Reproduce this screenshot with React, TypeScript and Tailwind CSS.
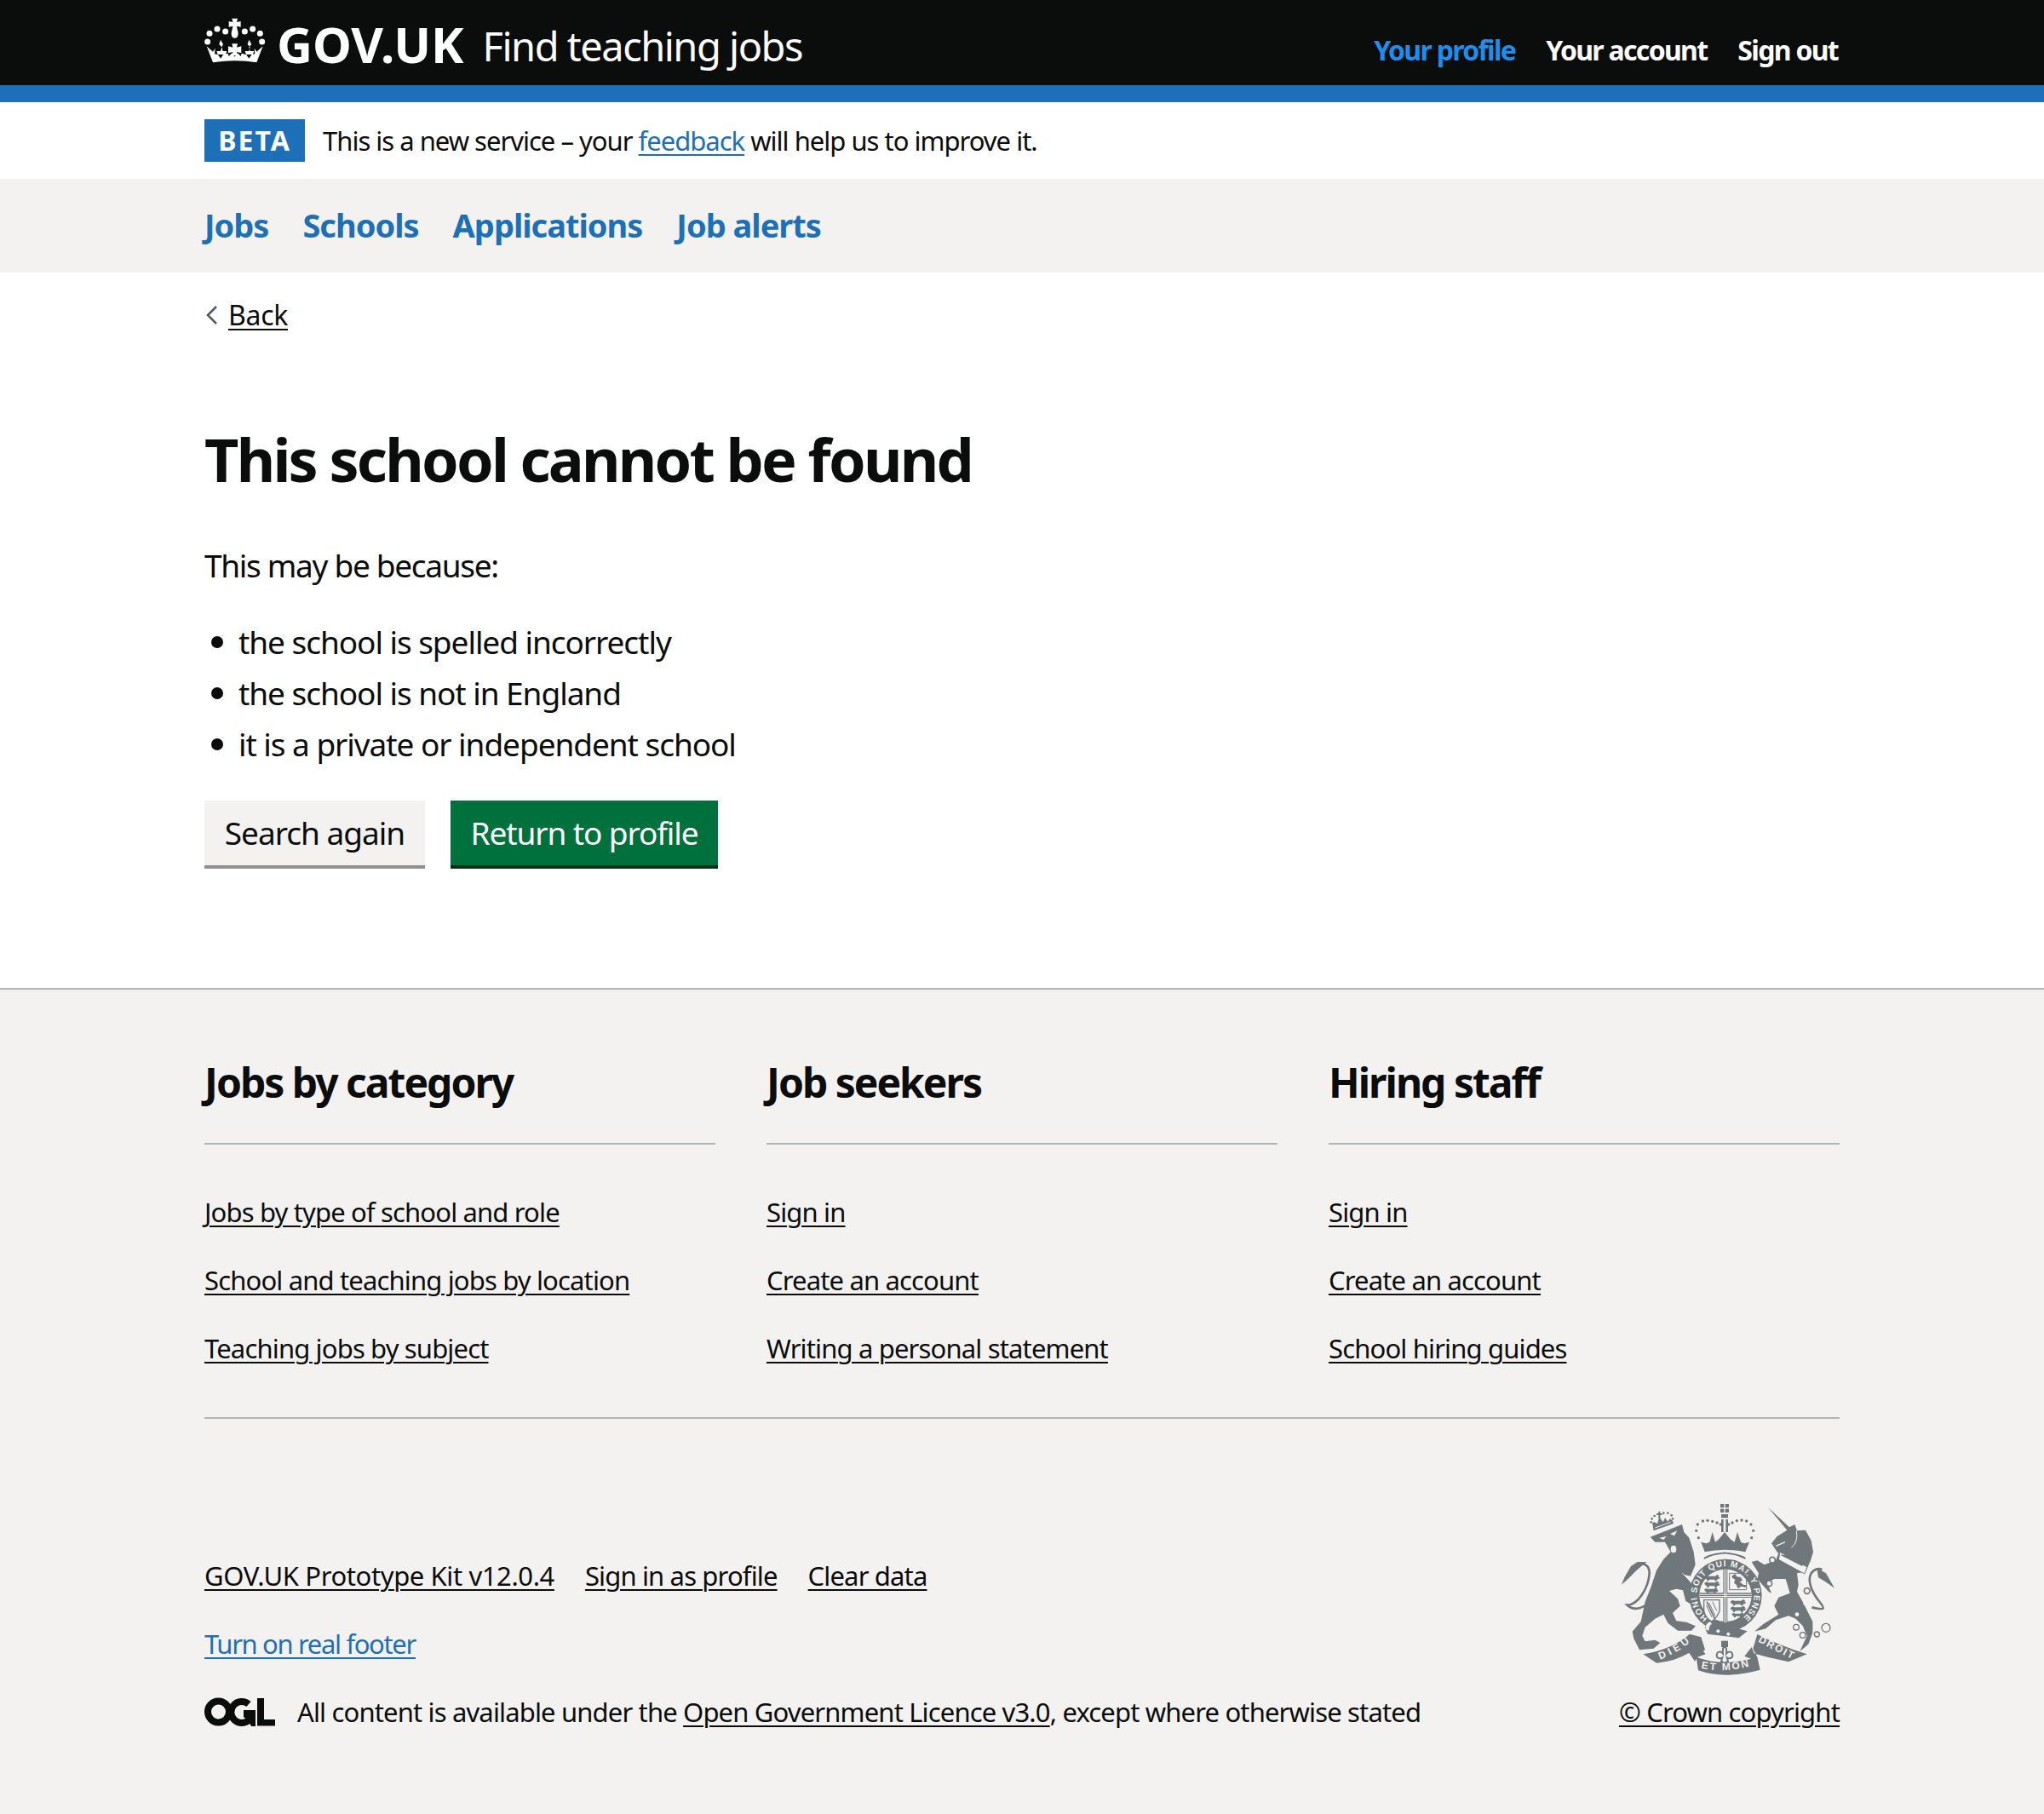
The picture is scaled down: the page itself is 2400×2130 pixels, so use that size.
import React from "react";

function Crown() {
  const dots: [number, number][] = [[41, 117], [48, 88], [75, 72], [104, 81], [233, 117], [226, 88], [200, 72], [172, 81]];
  return (
    <svg viewBox="30 30 216 165" className="w-[72px] h-[55px] shrink-0" fill="white">
      {dots.map((d, i) => <circle key={i} cx={d[0]} cy={d[1]} r="10.5" />)}
      <path d="M127 35h20l-3 13 14-3v20l-14-3 2 12c5 10 5 30-9 30s-14-20-9-30l2-12-14 3V45l14 3z" />
      <path d="M38 133L60 152 68 140 66 160 78 163 87 176 96 163 113 158 116 168 127 157 137 170 147 157 158 168 161 158 178 163 187 176 196 163 208 160 206 140 214 152 236 133 214 190Q137 177 60 190Z" />
      <path d="M87 110l9 16-5 10 4 14h14l-4 12H77l-4-12h14l4-14-9-10z" />
      <path d="M187 110l9 16-9 10 4 14h14l-4 12h-24l-4-12h14l4-14-9-10z" />
      <path d="M127 124h20l-3 13 16-4v24l-16-4 3 13h-20l3-13-16 4v-24l16 4z" />
    </svg>
  );
}

function Ogl() {
  return (
    <svg viewBox="0 0 83 34" className="w-[83px] h-[34px] shrink-0" fill="#0b0c0c">
      <circle cx="16.5" cy="17" r="12.5" fill="none" stroke="#0b0c0c" strokeWidth="8" />
      <path d="M52 8A12.5 12.5 0 1 0 53 26" fill="none" stroke="#0b0c0c" strokeWidth="8" />
      <path d="M46 15h14v19h-5l-3-6-6-5z" />
      <path d="M62 1h8v25h13v7.500H62z" />
    </svg>
  );
}

function MiniLion({ x, y, s = 1 }: { x: number; y: number; s?: number }) {
  return <path transform={`translate(${x} ${y}) scale(${s})`} d="M0 8l8-6 6 3h24l8-5 6 4-2 6 6-2-4 8-6 0-2 6h-6l-2-5H18l-2 5h-6l-1-6-5-2z" />;
}

function Crest() {
  const c = "#6f777b";
  const bg = "#f3f2f1";
  const arch: [number, number][] = [[313, 155], [305, 130], [310, 108], [328, 96], [345, 94], [362, 97], [378, 102], [391, 108], [419, 108], [432, 102], [448, 95], [465, 93], [482, 96], [498, 108], [506, 130], [500, 155]];
  const crownDots: [number, number][] = [[146, 100], [149, 88], [158, 78], [190, 68], [205, 68], [218, 76], [222, 88]];
  return (
    <svg viewBox="0 0 810 645" className="w-[270px] h-[215px]" fill={c}>
      {/* lion */}
      <path d="M143 152L255 108 262 135 280 155 296 205 302 250 285 290 262 285 300 330 315 360 312 385 292 392 268 378 258 340 235 335 210 342 240 370 248 395 222 420 235 448 270 452 303 466 288 482 240 482 205 455 190 425 160 440 125 470 115 500 125 520 160 515 178 525 155 545 105 550 85 510 80 485 110 450 125 380 145 330 165 270 190 230 215 205 195 170 160 170Z" />
      <path d="M130 390C100 412 78 406 62 392 100 392 136 332 140 282 142 252 118 240 98 250" fill="none" stroke={c} strokeWidth="8" />
      <path d="M130 240L98 240 75 255 52 295 42 320 65 300 92 272 112 255Z" />
      <path d="M175 155L200 150 190 162ZM213 141L238 130 228 148Z" fill={bg} />
      <ellipse cx="225" cy="195" rx="10" ry="13" fill={bg} />
      <path d="M256 280L300 322" stroke={bg} strokeWidth="3" />
      {/* lion crown */}
      <path d="M155 130L225 105 222 95 212 88 205 98 195 85 188 100 175 82 168 105 158 100 150 102Z" />
      <path d="M160 120L215 100" stroke={bg} strokeWidth="3" />
      <path d="M172 62h6v7h7v6h-7v12h-6V75h-7v-6h7z" />
      {crownDots.map((d, i) => <circle key={i} cx={d[0]} cy={d[1]} r="4" />)}
      <path d="M390 36h30v30h-30z" />
      <path d="M403 36h4v30h-4zM390 49h30v4h-30z" fill={bg} />
      <path d="M393 72h24v13h-24zM393 90h8v45h-8zM409 90h8v45h-8z" />
      {arch.map((d, i) => <circle key={i} cx={d[0]} cy={d[1]} r="5" />)}
      <path d="M322 170L340 175 352 170 362 135 372 170 385 160 405 135 425 160 440 170 450 135 462 170 474 175 492 170 478 205Q405 190 335 205Z" />
      <path d="M333 228Q405 190 478 228 470 216 405 208 342 216 333 228Z" stroke={c} strokeWidth="5" />
      {/* garter */}
      <circle cx="408" cy="358" r="128" />
      <circle cx="408" cy="358" r="92" fill={bg} />
      <path id="garter" d="M347 437A101 101 0 1 1 469 437" fill="none" />
      <text fill={bg} fontFamily="Liberation Sans" fontWeight="700" fontSize="30">
        <textPath href="#garter" textLength="500" lengthAdjust="spacing">HONI SOIT QUI MAL Y PENSE</textPath>
      </text>
      <path d="M400 266h15v188h-15zM316 349h184v17H316z" />
      <path d="M403 266h3v188h-3zM409 266h3v188h-3zM316 353h184v3H316zM316 360h184v3H316z" fill={bg} />
      <g>
        <MiniLion x={333} y={285} />
        <MiniLion x={333} y={308} />
        <MiniLion x={333} y={331} s={0.9} />
        <path d="M430 290l12-8 6 10 14 2 6 12-10 4 12 10 12 2-4 8-14-4-12 8-6-14-8-6 4-12-10-6z" />
        <path d="M422 280h60v58h-60z" fill="none" stroke={c} strokeWidth="3" />
        <MiniLion x={425} y={372} />
        <MiniLion x={425} y={395} />
        <MiniLion x={430} y={418} s={0.8} />
        <path d="M332 374h55v38q-8 25-28 38-22-13-27-38z" fill={bg} stroke={c} strokeWidth="4" />
        <path d="M342 380l28 60" stroke={c} strokeWidth="5" />
        <path d="M340 392l20 42M350 384l22 46M362 380l15 32" stroke={c} strokeWidth="3" />
      </g>
      <path d="M335 470l20-22 130 36-30 24-110-14z" />
      <path d="M338 478q-4-18 16-28l6 8q-12 8-10 24z" fill={bg} />
      <circle cx="382" cy="484" r="6" fill={bg} />
      <circle cx="418" cy="494" r="6" fill={bg} />
      {/* fleur */}
      <path d="M393 518h24v22h-24z" />
      <path d="M405 535c-10 10-6 20-6 28 -8-12-22-6-22 6 0 10 12 14 20 8l-4 14 12 6 12-6-4-14c8 6 20 2 20-8 0-12-14-18-22-6 0-8 4-18-6-28z" fill="none" stroke={c} strokeWidth="6" />
      {/* ribbons */}
      <path d="M118 565Q220 548 282 494L322 505 336 548 302 584 280 560Q230 590 165 596Z" />
      <path d="M280 560L300 590 310 575 338 565 318 540Z" />
      <path d="M305 575Q405 612 520 575L530 620Q405 655 312 622Z" />
      <path d="M520 495Q600 535 695 565 665 578 630 592 560 578 492 558L500 580 520 575 505 545Z" />
      <path d="M475 572L500 540 512 570 520 590Z" />
      {/* unicorn */}
      <g transform="translate(390 0)">
        <path d="M168 48L243 118 262 108 270 130 300 128 320 165 327 205 318 235 300 275 270 280 275 320 270 345 290 380 310 420 325 450 325 490 310 530 280 555 305 500 290 465 265 440 240 430 195 445 160 475 120 485 150 460 205 425 190 395 205 365 245 350 230 300 190 300 165 315 180 350 170 345 130 300 135 280 110 240 130 235 155 250 195 235 205 210 200 205 190 190 180 175 200 150 235 128Z" />
        <path d="M196 184L228 170" stroke={bg} strokeWidth="4" />
        <path d="M268 130Q275 170 250 190" fill="none" stroke={bg} strokeWidth="3" />
        <path d="M210 205L306 258 296 282 205 232Z" fill={bg} stroke={c} strokeWidth="3" />
        <path d="M215 214l12 3 2-8 6 10 10 3 3-8 6 12 10 3 3-8 6 13 12 5 8 8-5 8-75-38z" />
        <path d="M322 400C372 412 370 405 345 375 322 345 305 305 320 280 332 262 350 262 358 268" fill="none" stroke={c} strokeWidth="8" />
        <path d="M340 262L372 280 402 332 370 310 345 295Z" />
        <circle cx="298" cy="385" r="7" fill={bg} />
        <circle cx="270" cy="425" r="7" fill={bg} />
        <circle cx="305" cy="342" r="10" fill={bg} stroke={c} strokeWidth="5" />
        <circle cx="183" cy="233" r="10" fill={bg} stroke={c} strokeWidth="5" />
        <circle cx="172" cy="316" r="10" fill={bg} stroke={c} strokeWidth="5" />
        <circle cx="267" cy="470" r="10" fill={bg} stroke={c} strokeWidth="4" />
        <circle cx="290" cy="498" r="10" fill={bg} stroke={c} strokeWidth="4" />
        <circle cx="340" cy="495" r="9" fill={bg} stroke={c} strokeWidth="4" />
        <circle cx="372" cy="472" r="15" fill={bg} stroke={c} strokeWidth="4" />
      </g>
      <path id="r1" d="M178 584Q240 560 288 518" fill="none" />
      <path id="r2" d="M322 614Q405 632 500 606" fill="none" />
      <path id="r3" d="M522 520Q580 552 642 582" fill="none" />
      <g fill={bg} fontFamily="Liberation Sans" fontWeight="700">
        <text fontSize="36"><textPath href="#r1" textLength="120" lengthAdjust="spacing">DIEU</textPath></text>
        <text fontSize="36"><textPath href="#r2" textLength="170" lengthAdjust="spacing">ET MON</textPath></text>
        <text fontSize="36"><textPath href="#r3" textLength="135" lengthAdjust="spacing">DROIT</textPath></text>
      </g>
    </svg>
  );
}

const L = "underline decoration-[2px] underline-offset-[4px]";

function Col({ title, links }: { title: string; links: string[] }) {
  return (
    <div>
      <h2 className="text-[48px] leading-[56px] font-bold tracking-[-2px] pb-[43px] border-b-2 border-[#b1b4b6] mt-[-1px]">{title}</h2>
      <ul className="mt-[59px] flex flex-col gap-[40px]">
        {links.map((l) => <li key={l} className="text-[31px] leading-[40px] tracking-[-0.85px]"><a className={L}>{l}</a></li>)}
      </ul>
    </div>
  );
}

export default function App() {
  return (
    <div className="w-[2400px] h-[2130px] bg-white text-[#0b0c0c] overflow-hidden font-['Noto_Sans',sans-serif]">
      <header className="h-[120px] bg-[#0b0c0c] border-b-[20px] border-[#1d70b8] px-[240px] flex items-start justify-between">
        <div className="flex items-center h-[100px] text-white">
          <div className="mt-[-5px]"><Crown /></div>
          <span className="ml-[13px] text-[58px] leading-[100px] font-bold pt-[3px]">GOV.UK</span>
          <span className="ml-[22px] text-[47px] leading-[100px] tracking-[-1.5px] pt-[8px]">Find teaching jobs</span>
        </div>
        <nav className="flex gap-[36px] h-[100px] items-center pt-[18px] pr-[2px] text-[32px] font-bold text-white tracking-[-1.7px]">
          <a className="text-[#1d8feb]">Your profile</a>
          <a>Your account</a>
          <a>Sign out</a>
        </nav>
      </header>
      <div className="h-[90px] px-[240px] flex items-center">
        <span className="bg-[#1d70b8] text-white font-bold text-[32px] leading-[50px] h-[50px] w-[118px] text-center tracking-[2px]">BETA</span>
        <p className="ml-[21px] text-[31px] tracking-[-1px]">This is a new service – your <a className={`${L} text-[#1d70b8]`}>feedback</a> will help us to improve it.</p>
      </div>
      <nav className="h-[110px] bg-[#f3f2f1] px-[240px] flex items-center gap-[40px] text-[38px] font-bold text-[#1d70b8] tracking-[-1px] pb-[2px]">
        <a>Jobs</a><a>Schools</a><a>Applications</a><a>Job alerts</a>
      </nav>
      <main className="px-[240px] h-[840px] pt-[30px]">
        <a className="flex items-center h-[40px] text-[32px] tracking-[-0.3px]">
          <svg viewBox="0 0 14 24" className="w-[14px] h-[24px] ml-[2px] mr-[12px]" fill="none" stroke="#505a5f" strokeWidth="2.5"><path d="M12 2L2 12l10 10" /></svg>
          <span className={L}>Back</span>
        </a>
        <h1 className="mt-[99px] text-[70px] leading-[100px] font-bold tracking-[-2.75px]">This school cannot be found</h1>
        <p className="mt-[50px] text-[37px] leading-[50px] tracking-[-1.3px]">This may be because:</p>
        <ul className="mt-[40px] flex flex-col gap-[10px] text-[37px] leading-[50px] tracking-[-1.05px]">
          {["the school is spelled incorrectly", "the school is not in England", "it is a private or independent school"].map((t) => (
            <li key={t} className="flex items-center"><span className="w-[14px] h-[14px] rounded-full bg-[#0b0c0c] ml-[8px] mr-[18px]" />{t}</li>
          ))}
        </ul>
        <div className="flex gap-[30px] mt-[41px]">
          <a className="h-[80px] w-[259px] bg-[#f3f2f1] border-b-4 border-[#929191] flex items-center justify-center text-[37px] tracking-[-1px]">Search again</a>
          <a className="h-[80px] w-[314px] bg-[#00703c] border-b-4 border-[#002d18] flex items-center justify-center text-[37px] tracking-[-1.1px] text-white">Return to profile</a>
        </div>
      </main>
      <footer className="bg-[#f3f2f1] border-t-2 border-[#b1b4b6] h-[970px] px-[240px] pt-[82px]">
        <div className="grid grid-cols-3 gap-[60px]">
          <Col title="Jobs by category" links={["Jobs by type of school and role", "School and teaching jobs by location", "Teaching jobs by subject"]} />
          <Col title="Job seekers" links={["Sign in", "Create an account", "Writing a personal statement"]} />
          <Col title="Hiring staff" links={["Sign in", "Create an account", "School hiring guides"]} />
        </div>
        <div className="mt-[61px] border-t-2 border-[#b1b4b6] flex justify-between items-end text-[31px] leading-[40px] tracking-[-0.85px]">
          <div>
            <div className="flex gap-[36px]"><a className={`${L} tracking-[-0.4px]`}>GOV.UK Prototype Kit v12.0.4</a><a className={L}>Sign in as profile</a><a className={L}>Clear data</a></div>
            <div className="mt-[40px]"><a className={`${L} text-[#1d70b8] tracking-[-1.35px]`}>Turn on real footer</a></div>
            <div className="mt-[40px] flex items-center gap-[26px]"><Ogl /><span>All content is available under the <a className={L}>Open Government Licence v3.0</a>, except where otherwise stated</span></div>
          </div>
          <div className="flex flex-col items-end pt-[88px]">
            <Crest />
            <a className={`${L} mt-[21px]`}>© Crown copyright</a>
          </div>
        </div>
      </footer>
    </div>
  );
}
